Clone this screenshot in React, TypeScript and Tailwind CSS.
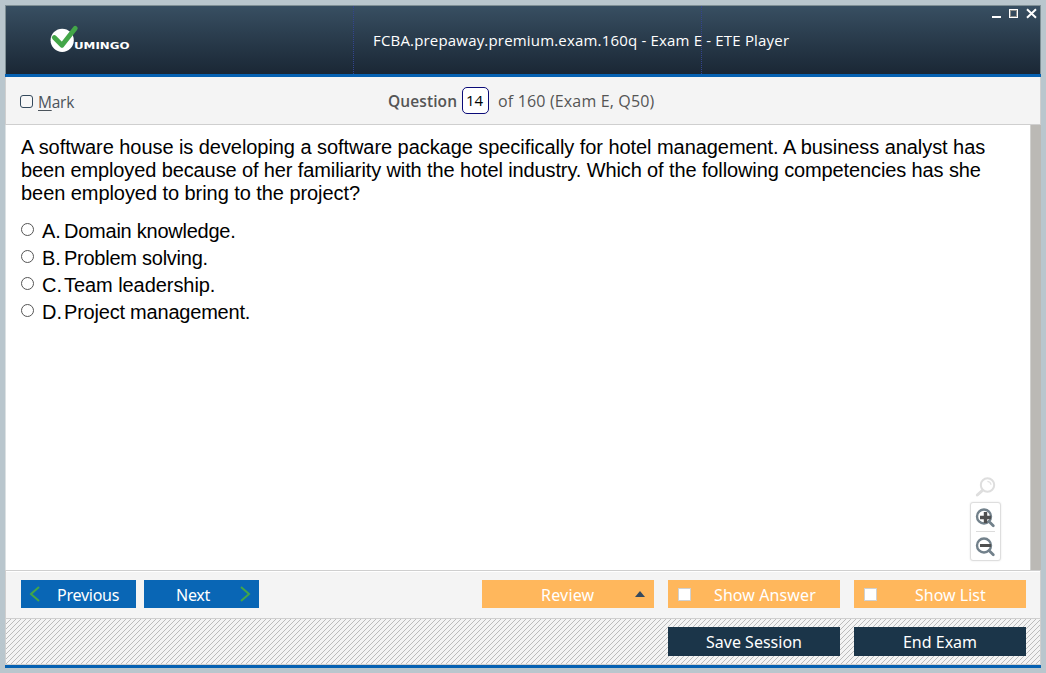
import React from "react";

const answers = [
  { key: "A.", text: "Domain knowledge.", spacing: "tracking-[-0.24px]" },
  { key: "B.", text: "Problem solving.", spacing: "tracking-[-0.25px]" },
  { key: "C.", text: "Team leadership.", spacing: "tracking-[-0.06px]" },
  { key: "D.", text: "Project management.", spacing: "tracking-[-0.21px]" },
];

function Logo() {
  return (
    <svg width="86" height="32" viewBox="0 0 86 32" className="block">
      <circle cx="13.2" cy="16.3" r="11.6" fill="#fff" />
      <path d="M5.3 13.5 L13 21.2 L26.3 4.3" fill="none" stroke="#43a648" strokeWidth="4.8" strokeLinecap="round" strokeLinejoin="round" />
      <text x="25" y="24.6" fill="#fff" fontFamily="DejaVu Sans" fontWeight="bold" fontSize="9.2" textLength="55.5" lengthAdjust="spacingAndGlyphs">
        UMINGO
      </text>
    </svg>
  );
}

function WindowControls() {
  return (
    <svg width="48" height="12" viewBox="0 0 48 12" shapeRendering="crispEdges" className="block">
      <rect x="0" y="9" width="9" height="2" fill="#fff" />
      <rect x="17.5" y="2.5" width="8" height="8" fill="none" stroke="#fff" />
      <rect x="18.5" y="3.5" width="6" height="6" fill="none" stroke="#8f8f8b" />
      <path d="M35 2.2 L44 10.8 M44 2.2 L35 10.8" stroke="#fff" strokeWidth="2" shapeRendering="auto" />
    </svg>
  );
}

function ZoomTools() {
  return (
    <div className="flex flex-col items-center">
      <svg width="22" height="22" viewBox="0 0 22 22" className="mb-[4px]">
        <circle cx="12.5" cy="9" r="6.7" fill="none" stroke="#dedede" strokeWidth="2" />
        <path d="M12.4 5.4 Q15.7 5.8 16 8.8" fill="none" stroke="#e2e2e2" strokeWidth="1.3" />
        <path d="M7.5 14.4 L2.3 19" stroke="#dedede" strokeWidth="3" strokeLinecap="round" />
      </svg>
      <div className="flex h-[59px] w-[31px] flex-col items-center rounded-[3px] border border-[#dedede] bg-white shadow-[0_0_2px_#e4e4e4]">
        <svg width="22" height="28" viewBox="0 0 22 28">
          <circle cx="9" cy="13.5" r="7" fill="none" stroke="#72818b" strokeWidth="2.4" />
          <path d="M14 18.5 L18.3 22.8" stroke="#72818b" strokeWidth="2.8" strokeLinecap="round" />
          <path d="M5 14.5 H16 M10.5 9 V20" stroke="#4f4f4f" strokeWidth="3.4" />
        </svg>
        <div className="h-px w-[19px] bg-[#dcdcdc]" />
        <svg width="22" height="28" viewBox="0 0 22 28">
          <circle cx="9" cy="13.5" r="7" fill="none" stroke="#72818b" strokeWidth="2.4" />
          <path d="M14 18.5 L18.3 22.8" stroke="#72818b" strokeWidth="2.8" strokeLinecap="round" />
          <path d="M5 13.5 H16" stroke="#4f4f4f" strokeWidth="3" />
        </svg>
      </div>
    </div>
  );
}

export default function App() {
  return (
    <div className="h-[673px] w-[1046px] overflow-hidden bg-[#b9c6cd] px-[5px] pt-[5px] font-['Open_Sans','Noto_Sans',sans-serif]">
      <div className="flex h-[663px] flex-col">
        <header className="flex h-[69px] shrink-0 border border-b-0 border-[#7f8f95] bg-linear-to-b from-[#384f62] to-[#1a2735] text-white">
          <div className="w-[348px] shrink-0 border-r border-dotted border-[#33448f] pt-[18px] pl-[43px]">
            <Logo />
          </div>
          <div className="w-[348px] shrink-0 border-r border-dotted border-[#33448f] pt-[23px] pl-[19px]">
            <h1 className="text-[15px] leading-[22px] font-medium whitespace-nowrap tracking-[0.18px]">
              FCBA.prepaway.premium.exam.160q - Exam E - ETE Player
            </h1>
          </div>
          <div className="flex flex-1 justify-end pt-[1px]">
            <WindowControls />
          </div>
        </header>
        <div className="h-[3px] shrink-0 bg-[#0561b2]" />

        <section className="flex h-[48px] shrink-0 items-start border-x border-b border-[#cfcfcf] bg-[#f4f4f4] text-[#555]">
          <label className="flex w-[382px] shrink-0 items-start pt-[14px] pl-[14px]">
            <span className="mt-[4px] mr-[5px] block size-[13px] rounded-[3px] border border-[#34495c] bg-[#f7f7f7]" />
            <span className="text-[15.5px] leading-[22px] tracking-[-0.25px] text-[#4b535b]">
              <span className="underline underline-offset-[2px]">M</span>ark
            </span>
          </label>
          <div className="flex pt-[9px] whitespace-nowrap">
            <span className="mt-[4px] w-[74px] text-[15.5px] leading-[22px] font-semibold tracking-[0.1px]">Question</span>
            <span className="mt-px flex h-[27px] w-[27px] items-center justify-center rounded-[5px] border border-[#0b0b78] bg-white pr-[2px] text-[15px] font-medium text-black">
              14
            </span>
            <span className="mt-[4px] ml-[9px] text-[16px] leading-[22px] tracking-[0.16px]">of 160 (Exam E, Q50)</span>
          </div>
        </section>

        <main className="flex h-[445px] shrink-0 border-l border-[#dce1e3] bg-white font-['Liberation_Sans',Arial,sans-serif] text-[20px] text-black">
          <div className="relative h-[445px] w-[1024px] shrink-0 pt-[11px] pl-[15px]">
            <div className="leading-[23px] whitespace-nowrap">
              <p className="tracking-[-0.06px]">A software house is developing a software package specifically for hotel management. A business analyst has</p>
              <p className="tracking-[-0.115px]">been employed because of her familiarity with the hotel industry. Which of the following competencies has she</p>
              <p className="tracking-[-0.06px]">been employed to bring to the project?</p>
            </div>
            <ul className="mt-[13px]">
              {answers.map((a) => (
                <li key={a.key} className="flex h-[27px] items-start leading-[27px] whitespace-nowrap">
                  <span className="mt-[5px] mr-[8px] block size-[13px] rounded-full border border-[#555]" />
                  <span className="w-[22px]">{a.key}</span>
                  <span className={a.spacing}>{a.text}</span>
                </li>
              ))}
            </ul>
            <div className="absolute top-[351px] left-[964px]">
              <ZoomTools />
            </div>
          </div>
          <div className="flex-1 border-l border-[#d0d0ce] bg-[#bbb9b5]" />
        </main>

        <footer className="shrink-0 font-['Noto_Sans','Open_Sans',sans-serif] text-[16px] text-white">
          <div className="flex h-[49px] items-start border-x border-y border-[#cfcfcf] bg-[#f4f4f4] pl-[15px] pt-[9px] shadow-[inset_0_1px_0_#fff]">
            <button className="flex h-[28px] w-[115px] items-center bg-[#0966b5] pl-[8px]">
              <svg width="12" height="18" viewBox="0 0 12 18">
                <path d="M10 2 L2 9 L10 16" fill="none" stroke="#43a648" strokeWidth="2" />
              </svg>
              <span className="ml-[16px] pt-[2px] tracking-[-0.25px]">Previous</span>
            </button>
            <button className="ml-[8px] flex h-[28px] w-[115px] items-center bg-[#0966b5] pl-[32px]">
              <span className="w-[63px] pt-[2px] text-left tracking-[-0.25px]">Next</span>
              <svg width="12" height="18" viewBox="0 0 12 18">
                <path d="M2 2 L10 9 L2 16" fill="none" stroke="#43a648" strokeWidth="2" />
              </svg>
            </button>
            <button className="ml-[223px] flex h-[28px] w-[172px] items-center bg-[#ffb75c] pl-[59px]">
              <span className="w-[94px] pt-[2px] text-left tracking-[0.2px]">Review</span>
              <svg width="10" height="6" viewBox="0 0 10 6">
                <path d="M0 6 L5 0 L10 6 Z" fill="#34495e" />
              </svg>
            </button>
            <button className="ml-[14px] flex h-[28px] w-[172px] items-center bg-[#ffb75c] pl-[10px]">
              <span className="mr-[23px] block size-[13px] border border-[#d0d0d0] bg-white" />
              <span className="pt-[2px] tracking-[0.1px]">Show Answer</span>
            </button>
            <button className="ml-[14px] flex h-[28px] w-[172px] items-center bg-[#ffb75c] pl-[10px]">
              <span className="mr-[38px] block size-[13px] border border-[#d0d0d0] bg-white" />
              <span className="pt-[2px]">Show List</span>
            </button>
          </div>
          <div className="relative flex h-[46px] items-start justify-end gap-[14px] border-x border-b border-[#cfcfcf] bg-[#f4f4f4] pt-[8px] pr-[14px]">
            <svg className="absolute inset-0" width="1034" height="45" shapeRendering="crispEdges">
              <defs>
                <pattern id="hatch" width="5" height="5" patternUnits="userSpaceOnUse">
                  <path d="M4 0h1v1h-1zM3 1h1v1h-1zM2 2h1v1h-1zM1 3h1v1h-1zM0 4h1v1h-1z" fill="#bcbcbc" />
                </pattern>
              </defs>
              <rect width="1034" height="45" fill="url(#hatch)" />
            </svg>
            <button className="relative h-[29px] w-[172px] bg-[#1b3549]">Save Session</button>
            <button className="relative h-[29px] w-[172px] bg-[#1b3549]">End Exam</button>
          </div>
          <div className="h-[3px] bg-[#0561b2]" />
        </footer>
      </div>
    </div>
  );
}
